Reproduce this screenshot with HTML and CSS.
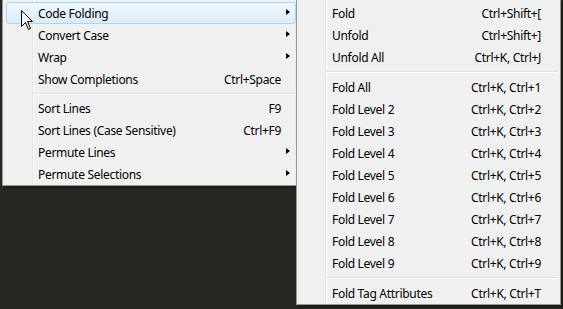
FILE: index.html
```html
<!DOCTYPE html>
<html>
<head>
<meta charset="utf-8">
<link rel="stylesheet" href="styles.css">
</head>
<body>
<div class="menu main-menu">
  <div class="item active"><span class="label">Code Folding</span><span class="sub"><span class="arrow"></span></span></div>
  <div class="item"><span class="label">Convert Case</span><span class="sub"><span class="arrow"></span></span></div>
  <div class="item"><span class="label">Wrap</span><span class="sub"><span class="arrow"></span></span></div>
  <div class="item"><span class="label">Show Completions</span><span class="key">Ctrl+Space</span><span class="sub"></span></div>
  <div class="sep"></div>
  <div class="item"><span class="label">Sort Lines</span><span class="key">F9</span><span class="sub"></span></div>
  <div class="item"><span class="label">Sort Lines (Case Sensitive)</span><span class="key">Ctrl+F9</span><span class="sub"></span></div>
  <div class="item"><span class="label">Permute Lines</span><span class="sub"><span class="arrow"></span></span></div>
  <div class="item"><span class="label">Permute Selections</span><span class="sub"><span class="arrow"></span></span></div>
</div>
<div class="menu sub-menu">
  <div class="item"><span class="label">Fold</span><span class="key">Ctrl+Shift+[</span><span class="sub"></span></div>
  <div class="item"><span class="label">Unfold</span><span class="key">Ctrl+Shift+]</span><span class="sub"></span></div>
  <div class="item"><span class="label">Unfold All</span><span class="key">Ctrl+K, Ctrl+J</span><span class="sub"></span></div>
  <div class="sep"></div>
  <div class="item"><span class="label">Fold All</span><span class="key">Ctrl+K, Ctrl+1</span><span class="sub"></span></div>
  <div class="item"><span class="label">Fold Level 2</span><span class="key">Ctrl+K, Ctrl+2</span><span class="sub"></span></div>
  <div class="item"><span class="label">Fold Level 3</span><span class="key">Ctrl+K, Ctrl+3</span><span class="sub"></span></div>
  <div class="item"><span class="label">Fold Level 4</span><span class="key">Ctrl+K, Ctrl+4</span><span class="sub"></span></div>
  <div class="item"><span class="label">Fold Level 5</span><span class="key">Ctrl+K, Ctrl+5</span><span class="sub"></span></div>
  <div class="item"><span class="label">Fold Level 6</span><span class="key">Ctrl+K, Ctrl+6</span><span class="sub"></span></div>
  <div class="item"><span class="label">Fold Level 7</span><span class="key">Ctrl+K, Ctrl+7</span><span class="sub"></span></div>
  <div class="item"><span class="label">Fold Level 8</span><span class="key">Ctrl+K, Ctrl+8</span><span class="sub"></span></div>
  <div class="item"><span class="label">Fold Level 9</span><span class="key">Ctrl+K, Ctrl+9</span><span class="sub"></span></div>
  <div class="sep"></div>
  <div class="item"><span class="label">Fold Tag Attributes</span><span class="key">Ctrl+K, Ctrl+T</span><span class="sub"></span></div>
</div>
<svg class="cursor" width="13" height="21" viewBox="0 0 13 21">
  <path d="M0.5 0.5 L0.5 16.5 L4.5 12.5 L7.5 19.5 L9.5 18.5 L6.5 11.5 L11.5 11.5 Z" fill="#f4f4f4" stroke="#000" stroke-width="1" stroke-linejoin="miter"/>
</svg>
</body>
</html>
```
FILE: styles.css
```css
html, body {
  margin: 0;
  padding: 0;
}
body {
  width: 563px;
  height: 309px;
  background: #272822;
  overflow: hidden;
  position: relative;
  font-family: "Noto Sans", "Open Sans", sans-serif;
  font-size: 12px;
  letter-spacing: -0.3px;
  color: #000;
}
.menu {
  position: absolute;
  top: -1px;
  box-sizing: border-box;
  background: #f0f0f0;
  border: 1px solid #979797;
  box-shadow: 2px 2px 3px rgba(0, 0, 0, 0.35);
}
.menu::before {
  content: "";
  position: absolute;
  top: 0;
  bottom: 0;
  width: 1px;
  background: #e2e3e3;
  border-right: 1px solid #ffffff;
}
.main-menu {
  left: 2px;
  width: 296px;
  padding: 2px 1px 0 3px;
}
.main-menu::before {
  left: 29px;
}
.sub-menu {
  left: 296px;
  width: 265px;
  padding: 2px 2px 0 3px;
}
.sub-menu::before {
  left: 28px;
}
.item {
  position: relative;
  z-index: 1;
  display: flex;
  align-items: center;
  height: 22px;
  box-sizing: border-box;
  padding-left: 31px;
  white-space: nowrap;
  border: 1px solid transparent;
  border-radius: 3px;
}
.item.active {
  background: linear-gradient(#eef6fc, #dcecf8);
  border-color: #a8d8eb;
}
.label {
  flex: 1;
}
.key {
  text-align: right;
}
.sub {
  position: relative;
  width: 14px;
  height: 100%;
}
.sub-menu .sub {
  width: 16px;
}
.arrow {
  position: absolute;
  left: 5px;
  top: 6px;
  width: 0;
  height: 0;
  border-left: 4px solid #000;
  border-top: 3.5px solid transparent;
  border-bottom: 3.5px solid transparent;
}
.sep {
  position: relative;
  z-index: 1;
  height: 7px;
  margin-left: 27px;
  display: flex;
  flex-direction: column;
  justify-content: center;
}
.sep::before {
  content: "";
  display: block;
  height: 1px;
  background: #e0e0e0;
  border-bottom: 1px solid #ffffff;
}
.sub-menu .sep {
  height: 8px;
  margin-left: 26px;
}
.cursor {
  position: absolute;
  left: 21px;
  top: 10px;
  z-index: 5;
}
```
